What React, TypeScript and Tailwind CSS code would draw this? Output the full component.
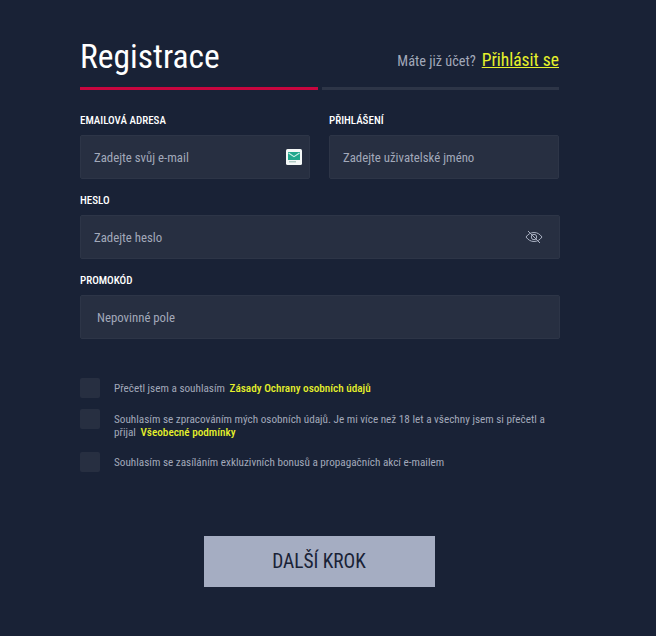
import { useState } from 'react'

function MailIcon() {
  return (
    <svg width="16" height="16" viewBox="0 0 16 16" className="shrink-0">
      <rect width="16" height="16" rx="1.5" fill="#f4f8f7" />
      <rect x="2" y="3" width="12" height="8" fill="#21a78d" />
      <path d="M2.5 4l5.5 3.6L13.500 4" fill="none" stroke="#c9efe6" strokeWidth="1.100" />
      <rect x="3" y="12.300" width="7" height="1" fill="#8fb5ad" />
    </svg>
  )
}

function EyeOffIcon() {
  return (
    <svg width="18" height="14" viewBox="0 0 18 14" fill="none" stroke="#a9b0c1" strokeWidth="1" className="shrink-0">
      <path d="M1 7c2.200-3 4.800-4.500 8-4.500S14.800 4 17 7c-2.200 3-4.800 4.500-8 4.500S3.200 10 1 7z" />
      <circle cx="9" cy="7" r="2.700" />
      <path d="M3 1l12 12" />
    </svg>
  )
}

function Field({ label, placeholder, className, inputClass, icon }: {
  label: string
  placeholder: string
  className?: string
  inputClass?: string
  icon?: React.ReactNode
}) {
  return (
    <label className={`block ${className ?? ''}`}>
      <span className="block h-[23px] pt-[1px] text-[11px] leading-[16px] font-medium text-white">{label}</span>
      <span className={`flex h-[44px] items-center justify-between rounded-[2px] border border-[#2d3547] bg-[#272f41] ${inputClass ?? 'pl-[13px] pr-[16px]'}`}>
        <input
          placeholder={placeholder}
          className="w-full min-w-0 bg-transparent pt-[2px] text-[12.800px] text-white outline-none placeholder:text-[#a2a9ba]"
        />
        {icon}
      </span>
    </label>
  )
}

function Check({ children, className }: { children: React.ReactNode; className?: string }) {
  const [on, setOn] = useState(false)
  return (
    <label className={`flex items-start gap-[14px] ${className ?? ''}`}>
      <input
        type="checkbox"
        checked={on}
        onChange={() => setOn(!on)}
        className="h-[20px] w-[20px] shrink-0 appearance-none rounded-[2px] bg-[#272f41]"
      />
      <span className="pt-[4px] text-[11.200px] leading-[13px] text-[#a2a9ba]">{children}</span>
    </label>
  )
}

export default function App() {
  return (
    <div className="min-h-[636px] bg-[#192236] pt-[31px] pr-[96px] pl-[80px] [font-family:Roboto,'Liberation_Sans',sans-serif] [font-stretch:75%]">
      <div className="mb-[6px] flex h-[50px] items-center justify-between">
        <h1 className="pt-[2px] text-[33.500px] leading-[40px] font-normal text-white">Registrace</h1>
        <div className="flex items-baseline gap-[6px] pt-[8px]">
          <span className="text-[14.300px] text-[#a2a9ba]">Máte již účet?</span>
          <a href="#" className="mr-[1px] text-[17.500px] text-[#e6f12b] underline">Přihlásit se</a>
        </div>
      </div>
      <div className="flex gap-[4px]">
        <div className="h-[3px] w-[238px] bg-[#c8063f]" />
        <div className="h-[3px] w-[237px] bg-[#2d3547]" />
      </div>

      <div className="mt-[22px] flex gap-[19px]">
        <Field label="EMAILOVÁ ADRESA" placeholder="Zadejte svůj e-mail" className="w-[230px]" inputClass="pl-[13px] pr-[7px]" icon={<MailIcon />} />
        <Field label="PŘIHLÁŠENÍ" placeholder="Zadejte uživatelské jméno" className="w-[230px]" />
      </div>
      <Field label="HESLO" placeholder="Zadejte heslo" className="mt-[13px]" icon={<EyeOffIcon />} />
      <Field label="PROMOKÓD" placeholder="Nepovinné pole" className="mt-[13px]" inputClass="pl-[16px] pr-[16px]" />

      <Check className="mt-[39px]">
        Přečetl jsem a souhlasím <a href="#" className="ml-[2px] font-medium text-[#e6f12b]">Zásady Ochrany osobních údajů</a>
      </Check>
      <Check className="mt-[11px]">
        Souhlasím se zpracováním mých osobních údajů. Je mi více než 18 let a všechny jsem si přečetl a přijal <a href="#" className="ml-[2px] font-medium text-[#e6f12b]">Všeobecné podmínky</a>
      </Check>
      <Check className="mt-[13px]">Souhlasím se zasíláním exkluzivních bonusů a propagačních akcí e-mailem</Check>

      <button className="mx-auto mt-[64px] block h-[51px] w-[231px] translate-x-[-1px] bg-[#a5adc2] text-[19.400px] text-[#192236]">
        DALŠÍ KROK
      </button>
    </div>
  )
}
